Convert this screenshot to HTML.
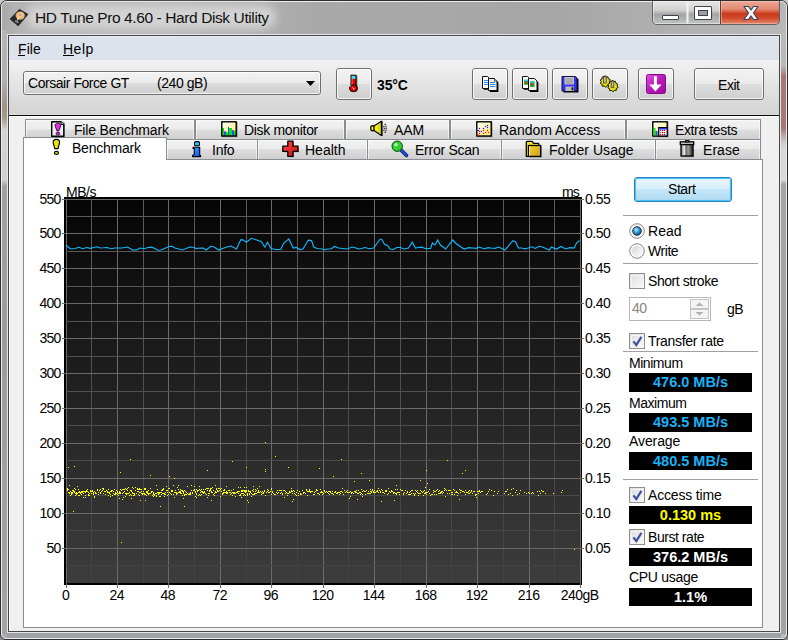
<!DOCTYPE html>
<html><head><meta charset="utf-8">
<style>
*{box-sizing:border-box;margin:0;padding:0}
html,body{width:788px;height:640px;overflow:hidden;background:linear-gradient(#c8c8c8,#a8a8a8 50%,#8c8c8c);font-family:"Liberation Sans",sans-serif;font-size:13px;color:#000}
.a{position:absolute}
.t{position:absolute;white-space:pre;line-height:16px;font-size:14px;letter-spacing:-0.45px}
#win{left:0;top:0;width:788px;height:640px;border:1px solid #2e2e2e;border-radius:7px 7px 6px 6px;
 background:linear-gradient(90deg,#a8a8a8 0,#b4b4b4 2%,#b8b8b8 20%,#a9a9a9 40%,#a6a6a6 70%,#b0b0b0 85%,#b8b8b8 100%);overflow:hidden}
#winhl{left:1px;top:1px;width:786px;height:638px;border:1px solid #ececec;border-radius:6px 6px 5px 5px}
#glow{left:26px;top:5px;width:250px;height:24px;border-radius:12px;background:#d3d3d3;filter:blur(5px)}
#title{left:35px;top:9px;font-size:15.5px;letter-spacing:-0.4px;color:#111;line-height:18px}
#clo{left:7px;top:34px;width:774px;height:599px;border:1px solid #e6e6e6}
#cli{left:8px;top:35px;width:772px;height:597px;border:1px solid #474747;background:#f0f0f0}
#menubar{left:9px;top:36px;width:770px;height:24px;background:#dce3ec;border-top:1px solid #e6edf6}
.btn{position:absolute;border:1px solid #707070;border-radius:3px;background:linear-gradient(#f2f2f2 0,#ebebeb 50%,#dddddd 50%,#cfcfcf 100%)}
.btn::after{content:"";position:absolute;left:0;top:0;right:0;bottom:0;border:1px solid rgba(255,255,255,.75);border-radius:2px}
#toolbar{left:9px;top:60px;width:770px;height:54px;background:linear-gradient(#f2f2f2,#d3d3d3)}
.tab{position:absolute;border:1px solid #898c95;background:linear-gradient(#f2f2f2 0,#ebebeb 45%,#dddddd 50%,#cfcfcf 100%)}
.tab::after{content:"";position:absolute;left:0;top:0;right:0;bottom:0;border:1px solid rgba(255,255,255,.6);border-bottom:0}
#panel{left:23px;top:159px;width:740px;height:469px;border:1px solid #898c95;background:#fff}
.sep{position:absolute;left:623px;width:135px;height:1px;background:#a0a0a0}
.vbox{position:absolute;left:629px;width:123px;background:#000;color:#fff;font-weight:bold;font-size:14.5px;text-align:center;line-height:19px}
.chk{position:absolute;left:629px;width:16px;height:16px;border:1px solid #8f8f8f;background:linear-gradient(135deg,#dcdcdc,#fbfbfb)}
.chk::after{content:"";position:absolute;left:1px;top:1px;right:1px;bottom:1px;border:1px solid #f4f4f4}
.yl{position:absolute;left:19.5px;width:41px;text-align:right;font-size:14px;letter-spacing:-0.75px;line-height:16px;white-space:pre}
.yr{position:absolute;left:585px;width:50px;text-align:left;font-size:14px;letter-spacing:-0.5px;line-height:16px;white-space:pre}
.xl{position:absolute;top:587px;width:80px;text-align:center;font-size:14px;letter-spacing:-0.5px;line-height:16px;white-space:pre}
</style></head><body>
<div id="win" class="a"></div>
<div id="winhl" class="a"></div>
<div id="glow" class="a"></div>
<!-- app icon -->
<svg class="a" style="left:9px;top:8px" width="20" height="20" viewBox="0 0 20 20">
 <path d="M10.4 1.3 L19 6.2 L9.2 18 L1 11 Z" fill="#2a2a2a" stroke="#1a1a1a" stroke-width=".6" stroke-linejoin="round"/>
 <ellipse cx="11.2" cy="7.6" rx="4.6" ry="4.2" fill="#f0b56c"/>
 <ellipse cx="11.8" cy="6.8" rx="2.8" ry="2.4" fill="#f8cf98" opacity=".7"/>
 <rect x="10.2" y="6.2" width="2.4" height="2" fill="#a0a8b8"/>
 <path d="M10 8.6 L8.2 12.6" stroke="#eeeeee" stroke-width="1"/>
 <path d="M6 13 L9.5 14.5" stroke="#9a9090" stroke-width="1.4"/>
</svg>
<div id="title" class="t">HD Tune Pro 4.60 - Hard Disk Utility</div>
<!-- caption buttons -->
<div class="a" style="left:652px;top:1px;width:128px;height:24px;border:1px solid #626262;border-top:0;border-radius:0 0 5px 5px;overflow:hidden;background:#999">
 <div class="a" style="left:0;top:0;width:34px;height:23px;background:linear-gradient(#e6e6e6 0,#d2d2d2 40%,#a4a4a4 58%,#b4b4b4 80%,#c4c4c4 100%);box-shadow:inset 0 0 0 1px rgba(255,255,255,.45)"></div>
 <div class="a" style="left:34px;top:0;width:1px;height:23px;background:#f0f0f0"></div>
 <div class="a" style="left:35px;top:0;width:32px;height:23px;background:linear-gradient(#e6e6e6 0,#d2d2d2 40%,#a4a4a4 58%,#b4b4b4 80%,#c4c4c4 100%);box-shadow:inset 0 0 0 1px rgba(255,255,255,.45)"></div>
 <div class="a" style="left:67px;top:0;width:1px;height:23px;background:#6a3a30"></div>
 <div class="a" style="left:68px;top:0;width:59px;height:23px;background:linear-gradient(#eca898 0,#e48a74 35%,#cc3a1c 55%,#d24a2c 75%,#e28a70 100%);box-shadow:inset 0 0 0 1px rgba(255,210,200,.45)"></div>
</div>
<div class="a" style="left:662px;top:15px;width:17px;height:5px;background:#fff;border:1px solid #3d4454;border-radius:1px"></div>
<div class="a" style="left:694px;top:6px;width:18px;height:14px;background:#fff;border:1px solid #3d4454;border-radius:1px"><div class="a" style="left:3px;top:3px;width:10px;height:6px;background:#9c9c9c;border:1px solid #3d4454"></div></div>
<svg class="a" style="left:742px;top:5px" width="18" height="16" viewBox="0 0 18 16">
 <path d="M2 1.5 L6.5 1.5 L9 5 L11.5 1.5 L16 1.5 L11.5 8 L16 14.5 L11.5 14.5 L9 11 L6.5 14.5 L2 14.5 L6.5 8 Z" fill="#f4f4f4" stroke="#3d4454" stroke-width="1.2" stroke-linejoin="round"/>
</svg>
<div class="a" style="left:2px;top:30px;width:5px;height:604px;background:linear-gradient(#b6b6b6 0,#b0b0b0 50px,#a39385 75px,#a69888 88px,#d4d4d4 100px,#d0d0d0 150px,#a2a2a2 156px,#9c9c9c 300px,#a4a4a4 604px)"></div>
<div class="a" style="left:781px;top:30px;width:5px;height:604px;background:linear-gradient(#bababa 0,#b8b8b8 36px,#a87878 46px,#a87676 98px,#c8c0c0 110px,#d8d8d8 118px,#d8d8d8 150px,#a4a4a4 154px,#a2a2a2 604px)"></div>
<div class="a" style="left:7px;top:633px;width:774px;height:5px;background:#9ea1a6"></div>
<div id="clo" class="a"></div>
<div id="cli" class="a"></div>
<div class="a" style="left:9px;top:36px;width:1px;height:595px;background:#fff"></div>
<div id="menubar" class="a"></div>
<div class="t" style="left:18px;top:41px;letter-spacing:0.1px">File</div>
<div class="a" style="left:18px;top:55px;width:7px;height:1px;background:#000"></div>
<div class="t" style="left:63px;top:41px;letter-spacing:0.5px">Help</div>
<div class="a" style="left:63px;top:55px;width:11px;height:1px;background:#000"></div>
<div id="toolbar" class="a"></div>
<div class="a" style="left:9px;top:114px;width:770px;height:1px;background:#dedede"></div>
<div class="a" style="left:9px;top:115px;width:770px;height:1px;background:#050505"></div>
<div class="a" style="left:9px;top:116px;width:770px;height:1px;background:#ffffff"></div>
<!-- combo -->
<div class="btn" style="left:23px;top:71px;width:298px;height:24px"></div>
<div class="t" style="left:28px;top:75px">Corsair Force GT</div>
<div class="t" style="left:157px;top:75px">(240 gB)</div>
<svg class="a" style="left:305px;top:80px" width="12" height="8"><path d="M1 1 L10 1 L5.5 6 Z" fill="#000"/></svg>
<!-- temp button -->
<div class="btn" style="left:336px;top:68px;width:36px;height:32px"></div>
<svg class="a" style="left:346px;top:74px" width="14" height="19" viewBox="0 0 14 19">
 <rect x="6.4" y="1.6" width="5" height="12" fill="#000" opacity=".5"/>
 <rect x="5" y="1.2" width="5" height="12" fill="#e80000" stroke="#000" stroke-width="1"/>
 <rect x="5.6" y="1.8" width="3.8" height="3.2" fill="#30e0f0"/>
 <rect x="5.6" y="5" width="1" height="8" fill="#ff6060"/>
 <ellipse cx="8" cy="14.6" rx="4" ry="3.5" fill="#000" opacity=".5"/>
 <ellipse cx="7.4" cy="14.2" rx="3.9" ry="3.5" fill="#e80000" stroke="#000" stroke-width="1"/>
 <path d="M4 13 Q4.3 11.6 5.3 11" stroke="#40e0f0" stroke-width="1" fill="none"/>
 <path d="M6.6 13.4 Q6.9 15 8.6 15" stroke="#fff" stroke-width="1" fill="none"/>
</svg>
<div class="t" style="left:377px;top:77px;font-weight:bold;font-size:14px;letter-spacing:-0.1px">35°C</div>
<!-- icon buttons -->
<div class="btn" style="left:472px;top:68px;width:36px;height:32px"></div>
<div class="btn" style="left:512px;top:68px;width:36px;height:32px"></div>
<div class="btn" style="left:552px;top:68px;width:36px;height:32px"></div>
<div class="btn" style="left:592px;top:68px;width:36px;height:32px"></div>
<div class="btn" style="left:638px;top:68px;width:36px;height:32px"></div>
<div class="btn" style="left:694px;top:68px;width:70px;height:32px"></div>
<div class="t" style="left:718px;top:77px">Exit</div>
<!-- copy icon -->
<svg class="a" style="left:476px;top:70px" width="30" height="28" viewBox="0 0 30 28">
 <path d="M7 7 H12 L14 9 V19 H7 Z" fill="#000" transform="translate(0.8 0.8)"/>
 <path d="M6.5 6.5 H11.5 L13.5 8.5 V18.5 H6.5 Z" fill="#fbfbfb" stroke="#111" stroke-width="1"/>
 <rect x="8" y="10" width="4" height="1" fill="#1e8cff"/><rect x="8" y="12" width="4" height="1" fill="#1e8cff"/><rect x="8" y="14" width="4" height="1" fill="#1e8cff"/>
 <path d="M13 9 H19 L21.5 11.5 V21 H13 Z" fill="#000" transform="translate(0.9 0.9)"/>
 <path d="M12.5 8.5 H18.5 L21 11 V20.5 H12.5 Z" fill="#efefef" stroke="#111" stroke-width="1"/>
 <path d="M18.5 8.5 V11 H21" fill="#fff" stroke="#111" stroke-width=".8"/>
 <rect x="14" y="12" width="5" height="1" fill="#1e8cff"/><rect x="14" y="14" width="5.5" height="1" fill="#1e8cff"/><rect x="14" y="16" width="5.5" height="1" fill="#1e8cff"/>
</svg>
<svg class="a" style="left:516px;top:70px" width="30" height="28" viewBox="0 0 30 28">
 <path d="M7 7 H12 L14 9 V19 H7 Z" fill="#000" transform="translate(0.8 0.8)"/>
 <path d="M6.5 6.5 H11.5 L13.5 8.5 V18.5 H6.5 Z" fill="#fbfbfb" stroke="#111" stroke-width="1"/>
 <rect x="8" y="9.8" width="4.5" height="5" fill="#22b030"/><rect x="8" y="9.8" width="4.5" height="1.2" fill="#30c8f0"/><rect x="9.3" y="11.6" width="2" height="2" fill="#e82020"/>
 <path d="M13 9 H19 L21.5 11.5 V21 H13 Z" fill="#000" transform="translate(0.9 0.9)"/>
 <path d="M12.5 8.5 H18.5 L21 11 V20.5 H12.5 Z" fill="#efefef" stroke="#111" stroke-width="1"/>
 <rect x="14" y="11.5" width="4.5" height="5.5" fill="#22b030"/><rect x="14" y="11.5" width="4.5" height="1.2" fill="#30c8f0"/><rect x="15.2" y="13.5" width="2" height="2" fill="#e82020"/>
</svg>
<svg class="a" style="left:556px;top:70px" width="30" height="28" viewBox="0 0 30 28">
 <path d="M6.5 7 H20 L21.5 8.5 V21.5 H6.5 Z" fill="#000" transform="translate(1 1)"/>
 <path d="M6 6.5 H19.5 L21 8 V21 H6 Z" fill="#3434f0" stroke="#101040" stroke-width="1"/>
 <rect x="8.5" y="7" width="9.5" height="7.5" fill="#c8c8c8"/>
 <rect x="9.5" y="8.5" width="7.5" height="1" fill="#8a8a8a"/><rect x="9.5" y="10.5" width="7.5" height="1" fill="#8a8a8a"/><rect x="9.5" y="12.5" width="7.5" height="1" fill="#8a8a8a"/>
 <rect x="9.5" y="16.5" width="8.5" height="4.5" fill="#bdbdbd"/>
 <rect x="15.5" y="17.3" width="2" height="3" fill="#1a1a1a"/>
</svg>
<svg class="a" style="left:596px;top:70px" width="30" height="28" viewBox="0 0 30 28">
 <g stroke="#1a1a00" stroke-width="1">
  <path d="M9 5.5 L10 7.2 L12 6.8 L12.4 8.8 L14.3 9.6 L13.5 11.4 L14.7 13 L12.8 14 L12.8 16 L10.8 15.8 L9.6 17.4 L8.3 15.9 L6.3 16.3 L6.1 14.3 L4.3 13.4 L5.2 11.6 L4.2 9.9 L6 9 L6.2 7 L8.2 7.3 Z" fill="#e8dc10"/>
  <path d="M16.5 10 L17.5 11.7 L19.5 11.3 L19.9 13.3 L21.8 14.1 L21 15.9 L22.2 17.5 L20.3 18.5 L20.3 20.5 L18.3 20.3 L17.1 21.9 L15.8 20.4 L13.8 20.8 L13.6 18.8 L11.8 17.9 L12.7 16.1 L11.7 14.4 L13.5 13.5 L13.7 11.5 L15.7 11.8 Z" fill="#e8dc10"/>
 </g>
 <rect x="7.6" y="6.5" width="2.6" height="6.5" fill="#b8b8b8" stroke="#333" stroke-width=".7"/>
 <rect x="15.2" y="11" width="2.6" height="6.5" fill="#b8b8b8" stroke="#333" stroke-width=".7"/>
</svg>
<svg class="a" style="left:646px;top:74px" width="20" height="20" viewBox="0 0 20 20">
 <defs><linearGradient id="pg" x1="0" y1="0" x2="1" y2="1"><stop offset="0" stop-color="#e050e0"/><stop offset=".5" stop-color="#b818b8"/><stop offset="1" stop-color="#9a0a9a"/></linearGradient></defs>
 <rect x="0.5" y="0.5" width="19" height="19" rx="2" fill="url(#pg)" stroke="#880888"/>
 <path d="M7.9 2.3 H10.9 V10.6 H15.6 L9.4 17.4 L3.2 10.6 H7.9 Z" fill="#fff"/>
</svg>

<!-- tabs -->
<div class="tab" style="left:25px;top:119px;width:170px;height:22px"></div>
<div class="tab" style="left:195px;top:119px;width:150px;height:22px"></div>
<div class="tab" style="left:345px;top:119px;width:105px;height:22px"></div>
<div class="tab" style="left:450px;top:119px;width:176px;height:22px"></div>
<div class="tab" style="left:626px;top:119px;width:135px;height:22px"></div>
<div id="panel" class="a"></div>
<div class="tab" style="left:166px;top:139px;width:92px;height:21px"></div>
<div class="tab" style="left:257px;top:139px;width:111px;height:21px"></div>
<div class="tab" style="left:367px;top:139px;width:135px;height:21px"></div>
<div class="tab" style="left:501px;top:139px;width:155px;height:21px"></div>
<div class="tab" style="left:655px;top:139px;width:106px;height:21px"></div>
<div class="a" style="left:23px;top:137px;width:144px;height:23px;border:1px solid #898c95;border-bottom:0;background:#fff"></div>

<div class="t" style="left:74px;top:122px;letter-spacing:-0.18px">File Benchmark</div>
<div class="t" style="left:244px;top:122px;letter-spacing:-0.32px">Disk monitor</div>
<div class="t" style="left:394px;top:122px;letter-spacing:-0.05px">AAM</div>
<div class="t" style="left:499px;top:122px;letter-spacing:0.0px">Random Access</div>
<div class="t" style="left:675px;top:122px;letter-spacing:-0.37px">Extra tests</div>
<div class="t" style="left:72px;top:140px;letter-spacing:-0.23px">Benchmark</div>
<div class="t" style="left:212px;top:142px;letter-spacing:-0.25px">Info</div>
<div class="t" style="left:305px;top:142px;letter-spacing:0.0px">Health</div>
<div class="t" style="left:415px;top:142px;letter-spacing:-0.25px">Error Scan</div>
<div class="t" style="left:549px;top:142px;letter-spacing:0.05px">Folder Usage</div>
<div class="t" style="left:703px;top:142px;letter-spacing:0.05px">Erase</div>

<!-- tab icons -->
<svg class="a" style="left:50px;top:120px" width="17" height="18" viewBox="0 0 17 18">
 <rect x="2.4" y="2.4" width="12.6" height="15" fill="#000" opacity=".3"/>
 <path d="M1.7 1.7 H11 L13.8 4.5 V16.3 H1.7 Z" fill="#ececec" stroke="#000" stroke-width="1.4" stroke-linejoin="round"/>
 <path d="M11 1.7 V4.5 H13.8" fill="#fff" stroke="#000" stroke-width="1"/>
 <path d="M7.9 3.2 C10 3.2 10.8 4.3 10.6 6 L8.8 11 H7 L5.2 6 C5 4.3 5.8 3.2 7.9 3.2 Z" fill="#e030e8" stroke="#3a003a" stroke-width=".9"/>
 <ellipse cx="7.9" cy="13.6" rx="1.9" ry="1.3" fill="#e030e8" stroke="#3a003a" stroke-width=".9"/>
</svg>
<svg class="a" style="left:220px;top:121px" width="19" height="18" viewBox="0 0 19 18">
 <rect x="2" y="1" width="15.6" height="15.2" fill="#000" opacity=".35"/>
 <rect x="1.8" y="0.8" width="14.4" height="14.2" fill="url(#yg)"/>
 <rect x="2.0" y="6.9" width="2.0" height="7.9" fill="#00ee00"/><rect x="4.0" y="10.3" width="2.0" height="4.5" fill="#4040ff"/><rect x="6.0" y="11.1" width="2.0" height="3.7" fill="#00ee00"/><rect x="8.0" y="6.0" width="1.0" height="8.8" fill="#4040ff"/><rect x="9.0" y="7.0" width="3.0" height="7.8" fill="#00ee00"/><rect x="12.0" y="9.2" width="2.0" height="5.6" fill="#4040ff"/><rect x="14.0" y="9.9" width="2.2" height="4.9" fill="#00ee00"/>
 <rect x="1.8" y="0.8" width="14.4" height="14.2" fill="none" stroke="#000" stroke-width="1.4"/>
</svg>
<svg class="a" style="left:364px;top:118px" width="32" height="22" viewBox="0 0 32 22">
 <ellipse cx="8.6" cy="10.3" rx="1.9" ry="2.6" fill="#f2ee10" stroke="#000" stroke-width="1.2"/>
 <path d="M10 8 L17.4 3.2 V17.6 L10 12.6 Z" fill="#f2ee10" stroke="#000" stroke-width="1.2" stroke-linejoin="round"/>
 <rect x="17" y="3" width="1.6" height="15" fill="#000"/>
 <path d="M15 5.5 V15.5" stroke="#777" stroke-width=".8" stroke-dasharray="1 1"/>
 <path d="M19.6 8 Q21 10.3 19.6 12.8" fill="none" stroke="#000" stroke-width="1.1" stroke-dasharray="1.3 .7"/>
 <path d="M20.8 5.8 Q23.6 10.3 20.8 14.8" fill="none" stroke="#000" stroke-width="1.1" stroke-dasharray="1.3 .7"/>
</svg>
<svg class="a" style="left:476px;top:121px" width="18" height="18" viewBox="0 0 18 18">
 <defs><linearGradient id="yg" x1="0" y1="0" x2="1" y2="1"><stop offset="0" stop-color="#ffffff"/><stop offset="1" stop-color="#fff070"/></linearGradient></defs>
 <rect x="1" y="1" width="15.6" height="15.2" fill="#000" opacity=".35"/>
 <rect x="0.8" y="0.8" width="14.4" height="14.2" fill="url(#yg)" stroke="#000" stroke-width="1.4"/>
 <circle cx="3.5" cy="7.4" r=".75" fill="#1a1aff"/><circle cx="2.4" cy="9.4" r=".75" fill="#1a1aff"/><circle cx="5.4" cy="10.4" r=".75" fill="#1a1aff"/><circle cx="7.5" cy="7.4" r=".75" fill="#1a1aff"/><circle cx="9.5" cy="5.4" r=".75" fill="#1a1aff"/><circle cx="11.5" cy="4.4" r=".75" fill="#1a1aff"/><circle cx="11.5" cy="6.5" r=".75" fill="#1a1aff"/><circle cx="3.5" cy="10.5" r=".75" fill="#ff1010"/><circle cx="3.5" cy="12.5" r=".75" fill="#ff1010"/><circle cx="7.5" cy="9.5" r=".75" fill="#ff1010"/><circle cx="7.5" cy="12.5" r=".75" fill="#ff1010"/><circle cx="9.5" cy="11.5" r=".75" fill="#ff1010"/><circle cx="11.5" cy="9.5" r=".75" fill="#ff1010"/><circle cx="12.5" cy="11.5" r=".75" fill="#ff1010"/><circle cx="2.5" cy="14.2" r=".75" fill="#ff1010"/>
</svg>
<svg class="a" style="left:652px;top:121px" width="18" height="18" viewBox="0 0 18 18">
 <rect x="1" y="1" width="15.6" height="15.2" fill="#000" opacity=".35"/>
 <rect x="0.8" y="0.8" width="14.4" height="14.2" fill="url(#yg)" stroke="#000" stroke-width="1.4"/>
 <rect x="1.5" y="7" width="2" height="7.5" fill="#00ee00"/><rect x="3.5" y="10" width="2" height="4.5" fill="#4040ff"/><rect x="5.5" y="11" width="1" height="3.5" fill="#00ee00"/>
 <rect x="6.7" y="6.6" width="8.5" height="8.4" fill="#fff" stroke="#000" stroke-width="1.2"/>
 <rect x="7.3" y="7.2" width="7.3" height="1.3" fill="#0a0aff"/>
 <circle cx="8.5" cy="9.5" r=".75" fill="#ff1010"/><circle cx="10.5" cy="9.5" r=".75" fill="#1a1aff"/><circle cx="12.5" cy="9.5" r=".75" fill="#ff1010"/><circle cx="8.5" cy="11.5" r=".75" fill="#10c010"/><circle cx="10.5" cy="11.5" r=".75" fill="#ff1010"/><circle cx="12.5" cy="11.5" r=".75" fill="#ff1010"/><circle cx="8.5" cy="13.5" r=".75" fill="#ff1010"/><circle cx="10.5" cy="13.5" r=".75" fill="#ff1010"/><circle cx="12.5" cy="13.5" r=".75" fill="#1a1aff"/>
</svg>
<svg class="a" style="left:51px;top:138px" width="12" height="18" viewBox="0 0 12 18">
 <path d="M5.3 1.4 C8 1.4 8.8 2.8 8.5 5 L7 10.6 H3.8 L2.2 5 C1.9 2.8 2.8 1.4 5.3 1.4 Z" fill="#e8e010" stroke="#000" stroke-width="1.1"/>
 <ellipse cx="5.4" cy="14.9" rx="2.1" ry="1.5" fill="#e8e010" stroke="#000" stroke-width="1.1"/>
</svg>
<svg class="a" style="left:192px;top:141px" width="10" height="17" viewBox="0 0 10 17">
 <defs><linearGradient id="ig" x1="0" y1="0" x2="1" y2="1"><stop offset="0" stop-color="#40a0ff"/><stop offset="1" stop-color="#0050f0"/></linearGradient></defs>
 <rect x="2.5" y="0.6" width="5" height="4.2" rx="1.3" fill="#20c8f8" stroke="#000" stroke-width="1.1"/>
 <path d="M1 6.3 H7.7 V14.6 H8.6 V15.6 H0.5 V14.6 L2.3 13.6 V7.6 L1 7.4 Z" fill="url(#ig)" stroke="#000" stroke-width="1.1" stroke-linejoin="round"/>
</svg>
<svg class="a" style="left:281px;top:140px" width="19" height="19" viewBox="0 0 19 19">
 <defs><linearGradient id="rg" x1="0" y1="0" x2="1" y2="1"><stop offset="0" stop-color="#ff5050"/><stop offset="1" stop-color="#c80808"/></linearGradient></defs>
 <path d="M6.8 1.2 H12 V6.2 H17 V11.4 H12 V16.4 H6.8 V11.4 H1.8 V6.2 H6.8 Z" fill="#000" opacity=".35" transform="translate(.8 .8)"/>
 <path d="M6.8 1.2 H12 V6.2 H17 V11.4 H12 V16.4 H6.8 V11.4 H1.8 V6.2 H6.8 Z" fill="url(#rg)" stroke="#000" stroke-width="1.3" stroke-linejoin="round"/>
</svg>
<svg class="a" style="left:391px;top:140px" width="18" height="18" viewBox="0 0 18 18">
 <path d="M9 9 L15.5 15.5" stroke="#0a1a60" stroke-width="3.5" stroke-linecap="round"/>
 <path d="M9 9 L15.5 15.5" stroke="#2050e0" stroke-width="2" stroke-linecap="round"/>
 <circle cx="6.2" cy="6.2" r="5.2" fill="#30d030" stroke="#104010" stroke-width="1"/>
 <circle cx="5" cy="4.8" r="1.8" fill="#b0ffb0"/>
</svg>
<svg class="a" style="left:524px;top:139px" width="20" height="20" viewBox="0 0 20 20">
 <defs><linearGradient id="fg" x1="0" y1="0" x2="1" y2="1"><stop offset="0" stop-color="#f4d838"/><stop offset="1" stop-color="#d49a08"/></linearGradient></defs>
 <rect x="5.6" y="7.6" width="12.2" height="11" fill="#000" opacity=".3"/>
 <path d="M2.3 3.2 Q2.3 2.3 3.2 2.3 H8.2 L9.6 4.4 H14.7 V7 H4.6 V17.4 H2.3 Z" fill="#f2dc30" stroke="#000" stroke-width="1.3" stroke-linejoin="round"/>
 <rect x="4.5" y="6.5" width="12.2" height="10.9" fill="url(#fg)" stroke="#000" stroke-width="1.3"/>
 <rect x="5.2" y="7.2" width=".8" height="9.6" fill="#fff8a0"/>
 <rect x="14.3" y="7.2" width=".7" height="9.6" fill="#a8a8a8"/>
</svg>
<svg class="a" style="left:678px;top:139px" width="20" height="20" viewBox="0 0 20 20">
 <defs><linearGradient id="tg" x1="0" y1="0" x2="1" y2="0"><stop offset="0" stop-color="#7a7a7a"/><stop offset=".28" stop-color="#f0f0f0"/><stop offset=".42" stop-color="#6a6a6a"/><stop offset=".6" stop-color="#a0a0a0"/><stop offset=".9" stop-color="#3a3a3a"/><stop offset="1" stop-color="#555"/></linearGradient></defs>
 <rect x="4" y="6.6" width="12" height="11.6" fill="#000" opacity=".3"/>
 <rect x="3" y="5.4" width="12" height="11.6" fill="url(#tg)" stroke="#000" stroke-width="1.3"/>
 <rect x="2.3" y="2.8" width="13.4" height="2.8" fill="#c8c8c8" stroke="#000" stroke-width="1.3"/>
 <rect x="7.4" y="1.6" width="3.6" height="1.4" fill="#9a9a9a" stroke="#000" stroke-width="1"/>
</svg>

<!-- graph -->
<svg class="a" style="left:0;top:0" width="788" height="640" viewBox="0 0 788 640">
 <defs><linearGradient id="bg" x1="0" y1="0" x2="0" y2="1"><stop offset="0" stop-color="#050505"/><stop offset="1" stop-color="#3d3d3d"/></linearGradient><linearGradient id="mg" gradientUnits="userSpaceOnUse" x1="0" y1="199" x2="0" y2="583"><stop offset="0" stop-color="#5c5c5c"/><stop offset="1" stop-color="#424242"/></linearGradient></defs>
 <rect x="64" y="197" width="518" height="388" fill="#000"/>
 <rect x="66" y="199" width="515" height="384" fill="url(#bg)"/>
 <g stroke-width="1"><line x1="66.5" y1="199" x2="66.5" y2="588" stroke="#6a6a6a"/><line x1="91.5" y1="199" x2="91.5" y2="583" stroke="url(#mg)"/><line x1="117.5" y1="199" x2="117.5" y2="588" stroke="#6a6a6a"/><line x1="143.5" y1="199" x2="143.5" y2="583" stroke="url(#mg)"/><line x1="168.5" y1="199" x2="168.5" y2="588" stroke="#6a6a6a"/><line x1="194.5" y1="199" x2="194.5" y2="583" stroke="url(#mg)"/><line x1="220.5" y1="199" x2="220.5" y2="588" stroke="#6a6a6a"/><line x1="246.5" y1="199" x2="246.5" y2="583" stroke="url(#mg)"/><line x1="271.5" y1="199" x2="271.5" y2="588" stroke="#6a6a6a"/><line x1="297.5" y1="199" x2="297.5" y2="583" stroke="url(#mg)"/><line x1="323.5" y1="199" x2="323.5" y2="588" stroke="#6a6a6a"/><line x1="348.5" y1="199" x2="348.5" y2="583" stroke="url(#mg)"/><line x1="374.5" y1="199" x2="374.5" y2="588" stroke="#6a6a6a"/><line x1="400.5" y1="199" x2="400.5" y2="583" stroke="url(#mg)"/><line x1="426.5" y1="199" x2="426.5" y2="588" stroke="#6a6a6a"/><line x1="451.5" y1="199" x2="451.5" y2="583" stroke="url(#mg)"/><line x1="477.5" y1="199" x2="477.5" y2="588" stroke="#6a6a6a"/><line x1="503.5" y1="199" x2="503.5" y2="583" stroke="url(#mg)"/><line x1="529.5" y1="199" x2="529.5" y2="588" stroke="#6a6a6a"/><line x1="554.5" y1="199" x2="554.5" y2="583" stroke="url(#mg)"/><line x1="580.5" y1="199" x2="580.5" y2="588" stroke="#6a6a6a"/><line x1="62" y1="199.5" x2="584" y2="199.5" stroke="#6a6a6a"/><line x1="66" y1="216.5" x2="581" y2="216.5" stroke="url(#mg)"/><line x1="62" y1="233.5" x2="584" y2="233.5" stroke="#6a6a6a"/><line x1="66" y1="251.5" x2="581" y2="251.5" stroke="url(#mg)"/><line x1="62" y1="268.5" x2="584" y2="268.5" stroke="#6a6a6a"/><line x1="66" y1="286.5" x2="581" y2="286.5" stroke="url(#mg)"/><line x1="62" y1="303.5" x2="584" y2="303.5" stroke="#6a6a6a"/><line x1="66" y1="321.5" x2="581" y2="321.5" stroke="url(#mg)"/><line x1="62" y1="338.5" x2="584" y2="338.5" stroke="#6a6a6a"/><line x1="66" y1="356.5" x2="581" y2="356.5" stroke="url(#mg)"/><line x1="62" y1="373.5" x2="584" y2="373.5" stroke="#6a6a6a"/><line x1="66" y1="391.5" x2="581" y2="391.5" stroke="url(#mg)"/><line x1="62" y1="408.5" x2="584" y2="408.5" stroke="#6a6a6a"/><line x1="66" y1="425.5" x2="581" y2="425.5" stroke="url(#mg)"/><line x1="62" y1="443.5" x2="584" y2="443.5" stroke="#6a6a6a"/><line x1="66" y1="460.5" x2="581" y2="460.5" stroke="url(#mg)"/><line x1="62" y1="478.5" x2="584" y2="478.5" stroke="#6a6a6a"/><line x1="66" y1="495.5" x2="581" y2="495.5" stroke="url(#mg)"/><line x1="62" y1="513.5" x2="584" y2="513.5" stroke="#6a6a6a"/><line x1="66" y1="530.5" x2="581" y2="530.5" stroke="url(#mg)"/><line x1="62" y1="548.5" x2="584" y2="548.5" stroke="#6a6a6a"/><line x1="66" y1="565.5" x2="581" y2="565.5" stroke="url(#mg)"/></g>
 <g stroke="#6c6c6c" stroke-width="1"></g>
 <g fill="#ffff00"><rect x="67" y="488" width="1" height="1"/><rect x="67" y="489" width="1" height="1"/><rect x="67" y="490" width="1" height="1"/><rect x="68" y="467" width="1" height="1"/><rect x="68" y="489" width="1" height="1"/><rect x="68" y="492" width="1" height="1"/><rect x="69" y="485" width="1" height="1"/><rect x="69" y="492" width="1" height="1"/><rect x="69" y="493" width="1" height="1"/><rect x="70" y="491" width="1" height="1"/><rect x="70" y="495" width="1" height="1"/><rect x="71" y="492" width="1" height="1"/><rect x="71" y="493" width="1" height="1"/><rect x="71" y="494" width="1" height="1"/><rect x="72" y="490" width="1" height="1"/><rect x="72" y="492" width="1" height="1"/><rect x="72" y="493" width="1" height="1"/><rect x="73" y="490" width="1" height="1"/><rect x="73" y="491" width="1" height="1"/><rect x="73" y="511" width="1" height="1"/><rect x="74" y="466" width="1" height="1"/><rect x="74" y="488" width="1" height="1"/><rect x="74" y="491" width="1" height="1"/><rect x="74" y="492" width="1" height="1"/><rect x="75" y="489" width="1" height="1"/><rect x="75" y="493" width="1" height="1"/><rect x="75" y="495" width="1" height="1"/><rect x="76" y="492" width="1" height="1"/><rect x="76" y="493" width="1" height="1"/><rect x="76" y="494" width="1" height="1"/><rect x="77" y="486" width="1" height="1"/><rect x="77" y="493" width="1" height="1"/><rect x="78" y="489" width="1" height="1"/><rect x="78" y="492" width="1" height="1"/><rect x="78" y="495" width="1" height="1"/><rect x="79" y="491" width="1" height="1"/><rect x="79" y="492" width="1" height="1"/><rect x="79" y="495" width="1" height="1"/><rect x="80" y="492" width="1" height="1"/><rect x="80" y="493" width="1" height="1"/><rect x="81" y="491" width="1" height="1"/><rect x="81" y="492" width="1" height="1"/><rect x="81" y="494" width="1" height="1"/><rect x="82" y="491" width="1" height="1"/><rect x="82" y="492" width="1" height="1"/><rect x="83" y="491" width="1" height="1"/><rect x="83" y="493" width="1" height="1"/><rect x="83" y="497" width="1" height="1"/><rect x="84" y="491" width="1" height="1"/><rect x="85" y="491" width="1" height="1"/><rect x="85" y="492" width="1" height="1"/><rect x="85" y="495" width="1" height="1"/><rect x="85" y="497" width="1" height="1"/><rect x="86" y="490" width="1" height="1"/><rect x="86" y="491" width="1" height="1"/><rect x="87" y="489" width="1" height="1"/><rect x="87" y="491" width="1" height="1"/><rect x="88" y="492" width="1" height="1"/><rect x="88" y="494" width="1" height="1"/><rect x="88" y="495" width="1" height="1"/><rect x="89" y="493" width="1" height="1"/><rect x="89" y="495" width="1" height="1"/><rect x="90" y="490" width="1" height="1"/><rect x="90" y="491" width="1" height="1"/><rect x="91" y="491" width="1" height="1"/><rect x="91" y="493" width="1" height="1"/><rect x="92" y="490" width="1" height="1"/><rect x="92" y="491" width="1" height="1"/><rect x="93" y="492" width="1" height="1"/><rect x="93" y="493" width="1" height="1"/><rect x="93" y="494" width="1" height="1"/><rect x="94" y="491" width="1" height="1"/><rect x="94" y="496" width="1" height="1"/><rect x="94" y="497" width="1" height="1"/><rect x="95" y="492" width="1" height="1"/><rect x="95" y="493" width="1" height="1"/><rect x="96" y="493" width="1" height="1"/><rect x="97" y="489" width="1" height="1"/><rect x="97" y="490" width="1" height="1"/><rect x="98" y="492" width="1" height="1"/><rect x="98" y="494" width="1" height="1"/><rect x="99" y="490" width="1" height="1"/><rect x="100" y="489" width="1" height="1"/><rect x="100" y="492" width="1" height="1"/><rect x="100" y="493" width="1" height="1"/><rect x="101" y="491" width="1" height="1"/><rect x="102" y="488" width="1" height="1"/><rect x="102" y="490" width="1" height="1"/><rect x="103" y="488" width="1" height="1"/><rect x="103" y="489" width="1" height="1"/><rect x="103" y="493" width="1" height="1"/><rect x="104" y="491" width="1" height="1"/><rect x="105" y="491" width="1" height="1"/><rect x="105" y="494" width="1" height="1"/><rect x="106" y="490" width="1" height="1"/><rect x="107" y="491" width="1" height="1"/><rect x="107" y="492" width="1" height="1"/><rect x="108" y="489" width="1" height="1"/><rect x="108" y="492" width="1" height="1"/><rect x="108" y="495" width="1" height="1"/><rect x="109" y="492" width="1" height="1"/><rect x="109" y="493" width="1" height="1"/><rect x="110" y="491" width="1" height="1"/><rect x="110" y="494" width="1" height="1"/><rect x="110" y="496" width="1" height="1"/><rect x="111" y="490" width="1" height="1"/><rect x="111" y="491" width="1" height="1"/><rect x="112" y="490" width="1" height="1"/><rect x="112" y="495" width="1" height="1"/><rect x="113" y="491" width="1" height="1"/><rect x="113" y="493" width="1" height="1"/><rect x="114" y="489" width="1" height="1"/><rect x="114" y="494" width="1" height="1"/><rect x="115" y="492" width="1" height="1"/><rect x="115" y="493" width="1" height="1"/><rect x="115" y="494" width="1" height="1"/><rect x="116" y="490" width="1" height="1"/><rect x="116" y="493" width="1" height="1"/><rect x="117" y="491" width="1" height="1"/><rect x="117" y="492" width="1" height="1"/><rect x="117" y="494" width="1" height="1"/><rect x="118" y="493" width="1" height="1"/><rect x="118" y="495" width="1" height="1"/><rect x="119" y="491" width="1" height="1"/><rect x="119" y="492" width="1" height="1"/><rect x="119" y="493" width="1" height="1"/><rect x="119" y="498" width="1" height="1"/><rect x="120" y="472" width="1" height="1"/><rect x="120" y="489" width="1" height="1"/><rect x="120" y="492" width="1" height="1"/><rect x="120" y="493" width="1" height="1"/><rect x="121" y="490" width="1" height="1"/><rect x="121" y="542" width="1" height="1"/><rect x="122" y="489" width="1" height="1"/><rect x="122" y="493" width="1" height="1"/><rect x="122" y="499" width="1" height="1"/><rect x="123" y="489" width="1" height="1"/><rect x="123" y="492" width="1" height="1"/><rect x="123" y="497" width="1" height="1"/><rect x="124" y="489" width="1" height="1"/><rect x="124" y="491" width="1" height="1"/><rect x="125" y="488" width="1" height="1"/><rect x="125" y="493" width="1" height="1"/><rect x="125" y="496" width="1" height="1"/><rect x="126" y="489" width="1" height="1"/><rect x="126" y="493" width="1" height="1"/><rect x="126" y="494" width="1" height="1"/><rect x="127" y="488" width="1" height="1"/><rect x="127" y="490" width="1" height="1"/><rect x="127" y="493" width="1" height="1"/><rect x="128" y="487" width="1" height="1"/><rect x="128" y="493" width="1" height="1"/><rect x="129" y="492" width="1" height="1"/><rect x="129" y="495" width="1" height="1"/><rect x="130" y="459" width="1" height="1"/><rect x="130" y="490" width="1" height="1"/><rect x="130" y="494" width="1" height="1"/><rect x="131" y="490" width="1" height="1"/><rect x="131" y="491" width="1" height="1"/><rect x="131" y="495" width="1" height="1"/><rect x="131" y="498" width="1" height="1"/><rect x="132" y="487" width="1" height="1"/><rect x="132" y="492" width="1" height="1"/><rect x="132" y="493" width="1" height="1"/><rect x="133" y="488" width="1" height="1"/><rect x="133" y="493" width="1" height="1"/><rect x="133" y="495" width="1" height="1"/><rect x="134" y="493" width="1" height="1"/><rect x="134" y="494" width="1" height="1"/><rect x="134" y="495" width="1" height="1"/><rect x="135" y="487" width="1" height="1"/><rect x="135" y="490" width="1" height="1"/><rect x="136" y="493" width="1" height="1"/><rect x="137" y="488" width="1" height="1"/><rect x="137" y="489" width="1" height="1"/><rect x="137" y="491" width="1" height="1"/><rect x="138" y="489" width="1" height="1"/><rect x="138" y="491" width="1" height="1"/><rect x="138" y="494" width="1" height="1"/><rect x="139" y="488" width="1" height="1"/><rect x="139" y="489" width="1" height="1"/><rect x="139" y="492" width="1" height="1"/><rect x="139" y="495" width="1" height="1"/><rect x="140" y="489" width="1" height="1"/><rect x="140" y="492" width="1" height="1"/><rect x="140" y="500" width="1" height="1"/><rect x="141" y="489" width="1" height="1"/><rect x="141" y="491" width="1" height="1"/><rect x="141" y="493" width="1" height="1"/><rect x="142" y="493" width="1" height="1"/><rect x="142" y="494" width="1" height="1"/><rect x="143" y="491" width="1" height="1"/><rect x="143" y="493" width="1" height="1"/><rect x="144" y="488" width="1" height="1"/><rect x="144" y="489" width="1" height="1"/><rect x="144" y="493" width="1" height="1"/><rect x="144" y="494" width="1" height="1"/><rect x="145" y="488" width="1" height="1"/><rect x="145" y="489" width="1" height="1"/><rect x="145" y="494" width="1" height="1"/><rect x="145" y="500" width="1" height="1"/><rect x="146" y="491" width="1" height="1"/><rect x="146" y="492" width="1" height="1"/><rect x="146" y="495" width="1" height="1"/><rect x="147" y="491" width="1" height="1"/><rect x="147" y="492" width="1" height="1"/><rect x="147" y="493" width="1" height="1"/><rect x="148" y="490" width="1" height="1"/><rect x="148" y="493" width="1" height="1"/><rect x="148" y="494" width="1" height="1"/><rect x="149" y="493" width="1" height="1"/><rect x="150" y="475" width="1" height="1"/><rect x="150" y="488" width="1" height="1"/><rect x="150" y="493" width="1" height="1"/><rect x="151" y="491" width="1" height="1"/><rect x="151" y="492" width="1" height="1"/><rect x="152" y="491" width="1" height="1"/><rect x="152" y="495" width="1" height="1"/><rect x="153" y="492" width="1" height="1"/><rect x="153" y="493" width="1" height="1"/><rect x="153" y="494" width="1" height="1"/><rect x="153" y="496" width="1" height="1"/><rect x="154" y="494" width="1" height="1"/><rect x="154" y="495" width="1" height="1"/><rect x="155" y="493" width="1" height="1"/><rect x="156" y="485" width="1" height="1"/><rect x="156" y="493" width="1" height="1"/><rect x="156" y="495" width="1" height="1"/><rect x="156" y="496" width="1" height="1"/><rect x="157" y="489" width="1" height="1"/><rect x="157" y="492" width="1" height="1"/><rect x="158" y="492" width="1" height="1"/><rect x="158" y="493" width="1" height="1"/><rect x="158" y="494" width="1" height="1"/><rect x="159" y="492" width="1" height="1"/><rect x="159" y="493" width="1" height="1"/><rect x="159" y="496" width="1" height="1"/><rect x="160" y="492" width="1" height="1"/><rect x="160" y="496" width="1" height="1"/><rect x="160" y="506" width="1" height="1"/><rect x="161" y="490" width="1" height="1"/><rect x="161" y="492" width="1" height="1"/><rect x="161" y="494" width="1" height="1"/><rect x="162" y="489" width="1" height="1"/><rect x="162" y="490" width="1" height="1"/><rect x="162" y="493" width="1" height="1"/><rect x="163" y="488" width="1" height="1"/><rect x="163" y="489" width="1" height="1"/><rect x="163" y="493" width="1" height="1"/><rect x="164" y="493" width="1" height="1"/><rect x="164" y="494" width="1" height="1"/><rect x="164" y="496" width="1" height="1"/><rect x="165" y="492" width="1" height="1"/><rect x="165" y="494" width="1" height="1"/><rect x="166" y="486" width="1" height="1"/><rect x="166" y="490" width="1" height="1"/><rect x="167" y="490" width="1" height="1"/><rect x="167" y="492" width="1" height="1"/><rect x="167" y="495" width="1" height="1"/><rect x="168" y="488" width="1" height="1"/><rect x="168" y="494" width="1" height="1"/><rect x="169" y="476" width="1" height="1"/><rect x="169" y="488" width="1" height="1"/><rect x="169" y="492" width="1" height="1"/><rect x="170" y="493" width="1" height="1"/><rect x="171" y="490" width="1" height="1"/><rect x="171" y="491" width="1" height="1"/><rect x="171" y="494" width="1" height="1"/><rect x="172" y="490" width="1" height="1"/><rect x="172" y="491" width="1" height="1"/><rect x="173" y="485" width="1" height="1"/><rect x="173" y="494" width="1" height="1"/><rect x="174" y="478" width="1" height="1"/><rect x="174" y="492" width="1" height="1"/><rect x="174" y="497" width="1" height="1"/><rect x="175" y="490" width="1" height="1"/><rect x="175" y="492" width="1" height="1"/><rect x="176" y="492" width="1" height="1"/><rect x="176" y="493" width="1" height="1"/><rect x="176" y="494" width="1" height="1"/><rect x="177" y="487" width="1" height="1"/><rect x="177" y="493" width="1" height="1"/><rect x="178" y="485" width="1" height="1"/><rect x="178" y="489" width="1" height="1"/><rect x="178" y="492" width="1" height="1"/><rect x="179" y="491" width="1" height="1"/><rect x="179" y="492" width="1" height="1"/><rect x="180" y="489" width="1" height="1"/><rect x="180" y="491" width="1" height="1"/><rect x="180" y="492" width="1" height="1"/><rect x="180" y="493" width="1" height="1"/><rect x="181" y="490" width="1" height="1"/><rect x="181" y="493" width="1" height="1"/><rect x="182" y="490" width="1" height="1"/><rect x="182" y="491" width="1" height="1"/><rect x="182" y="495" width="1" height="1"/><rect x="183" y="491" width="1" height="1"/><rect x="183" y="492" width="1" height="1"/><rect x="183" y="493" width="1" height="1"/><rect x="183" y="498" width="1" height="1"/><rect x="184" y="490" width="1" height="1"/><rect x="184" y="494" width="1" height="1"/><rect x="184" y="495" width="1" height="1"/><rect x="184" y="506" width="1" height="1"/><rect x="185" y="491" width="1" height="1"/><rect x="185" y="494" width="1" height="1"/><rect x="186" y="492" width="1" height="1"/><rect x="186" y="494" width="1" height="1"/><rect x="187" y="486" width="1" height="1"/><rect x="187" y="493" width="1" height="1"/><rect x="188" y="494" width="1" height="1"/><rect x="189" y="493" width="1" height="1"/><rect x="189" y="494" width="1" height="1"/><rect x="190" y="492" width="1" height="1"/><rect x="190" y="493" width="1" height="1"/><rect x="190" y="494" width="1" height="1"/><rect x="191" y="485" width="1" height="1"/><rect x="191" y="490" width="1" height="1"/><rect x="192" y="492" width="1" height="1"/><rect x="192" y="493" width="1" height="1"/><rect x="193" y="490" width="1" height="1"/><rect x="194" y="486" width="1" height="1"/><rect x="194" y="489" width="1" height="1"/><rect x="194" y="490" width="1" height="1"/><rect x="195" y="491" width="1" height="1"/><rect x="195" y="492" width="1" height="1"/><rect x="195" y="496" width="1" height="1"/><rect x="196" y="489" width="1" height="1"/><rect x="196" y="493" width="1" height="1"/><rect x="196" y="494" width="1" height="1"/><rect x="196" y="497" width="1" height="1"/><rect x="197" y="490" width="1" height="1"/><rect x="197" y="491" width="1" height="1"/><rect x="198" y="490" width="1" height="1"/><rect x="198" y="495" width="1" height="1"/><rect x="199" y="486" width="1" height="1"/><rect x="199" y="489" width="1" height="1"/><rect x="199" y="494" width="1" height="1"/><rect x="200" y="490" width="1" height="1"/><rect x="200" y="492" width="1" height="1"/><rect x="200" y="495" width="1" height="1"/><rect x="201" y="489" width="1" height="1"/><rect x="201" y="491" width="1" height="1"/><rect x="201" y="494" width="1" height="1"/><rect x="202" y="491" width="1" height="1"/><rect x="202" y="492" width="1" height="1"/><rect x="203" y="489" width="1" height="1"/><rect x="203" y="492" width="1" height="1"/><rect x="203" y="493" width="1" height="1"/><rect x="204" y="491" width="1" height="1"/><rect x="204" y="492" width="1" height="1"/><rect x="205" y="489" width="1" height="1"/><rect x="205" y="493" width="1" height="1"/><rect x="206" y="488" width="1" height="1"/><rect x="206" y="494" width="1" height="1"/><rect x="207" y="470" width="1" height="1"/><rect x="207" y="488" width="1" height="1"/><rect x="207" y="490" width="1" height="1"/><rect x="207" y="497" width="1" height="1"/><rect x="208" y="488" width="1" height="1"/><rect x="208" y="493" width="1" height="1"/><rect x="208" y="495" width="1" height="1"/><rect x="209" y="490" width="1" height="1"/><rect x="209" y="491" width="1" height="1"/><rect x="209" y="493" width="1" height="1"/><rect x="210" y="488" width="1" height="1"/><rect x="210" y="489" width="1" height="1"/><rect x="210" y="490" width="1" height="1"/><rect x="211" y="488" width="1" height="1"/><rect x="211" y="491" width="1" height="1"/><rect x="211" y="492" width="1" height="1"/><rect x="211" y="500" width="1" height="1"/><rect x="212" y="487" width="1" height="1"/><rect x="212" y="492" width="1" height="1"/><rect x="213" y="490" width="1" height="1"/><rect x="213" y="494" width="1" height="1"/><rect x="214" y="493" width="1" height="1"/><rect x="214" y="495" width="1" height="1"/><rect x="215" y="485" width="1" height="1"/><rect x="215" y="491" width="1" height="1"/><rect x="215" y="492" width="1" height="1"/><rect x="216" y="488" width="1" height="1"/><rect x="216" y="489" width="1" height="1"/><rect x="216" y="492" width="1" height="1"/><rect x="217" y="490" width="1" height="1"/><rect x="217" y="491" width="1" height="1"/><rect x="218" y="488" width="1" height="1"/><rect x="218" y="491" width="1" height="1"/><rect x="219" y="488" width="1" height="1"/><rect x="219" y="490" width="1" height="1"/><rect x="220" y="489" width="1" height="1"/><rect x="220" y="496" width="1" height="1"/><rect x="221" y="488" width="1" height="1"/><rect x="221" y="491" width="1" height="1"/><rect x="222" y="493" width="1" height="1"/><rect x="222" y="494" width="1" height="1"/><rect x="223" y="490" width="1" height="1"/><rect x="223" y="492" width="1" height="1"/><rect x="223" y="493" width="1" height="1"/><rect x="224" y="489" width="1" height="1"/><rect x="224" y="490" width="1" height="1"/><rect x="224" y="492" width="1" height="1"/><rect x="225" y="492" width="1" height="1"/><rect x="226" y="486" width="1" height="1"/><rect x="226" y="491" width="1" height="1"/><rect x="226" y="492" width="1" height="1"/><rect x="226" y="493" width="1" height="1"/><rect x="227" y="492" width="1" height="1"/><rect x="227" y="493" width="1" height="1"/><rect x="228" y="490" width="1" height="1"/><rect x="229" y="490" width="1" height="1"/><rect x="229" y="492" width="1" height="1"/><rect x="230" y="492" width="1" height="1"/><rect x="230" y="494" width="1" height="1"/><rect x="231" y="490" width="1" height="1"/><rect x="231" y="493" width="1" height="1"/><rect x="232" y="461" width="1" height="1"/><rect x="232" y="492" width="1" height="1"/><rect x="232" y="495" width="1" height="1"/><rect x="233" y="489" width="1" height="1"/><rect x="233" y="492" width="1" height="1"/><rect x="233" y="493" width="1" height="1"/><rect x="234" y="492" width="1" height="1"/><rect x="234" y="493" width="1" height="1"/><rect x="235" y="493" width="1" height="1"/><rect x="235" y="496" width="1" height="1"/><rect x="236" y="492" width="1" height="1"/><rect x="237" y="491" width="1" height="1"/><rect x="237" y="492" width="1" height="1"/><rect x="238" y="487" width="1" height="1"/><rect x="238" y="491" width="1" height="1"/><rect x="238" y="493" width="1" height="1"/><rect x="239" y="491" width="1" height="1"/><rect x="239" y="495" width="1" height="1"/><rect x="240" y="487" width="1" height="1"/><rect x="240" y="494" width="1" height="1"/><rect x="240" y="495" width="1" height="1"/><rect x="241" y="490" width="1" height="1"/><rect x="241" y="491" width="1" height="1"/><rect x="241" y="493" width="1" height="1"/><rect x="241" y="497" width="1" height="1"/><rect x="242" y="490" width="1" height="1"/><rect x="242" y="491" width="1" height="1"/><rect x="242" y="493" width="1" height="1"/><rect x="243" y="490" width="1" height="1"/><rect x="243" y="493" width="1" height="1"/><rect x="243" y="495" width="1" height="1"/><rect x="244" y="487" width="1" height="1"/><rect x="244" y="490" width="1" height="1"/><rect x="244" y="491" width="1" height="1"/><rect x="244" y="494" width="1" height="1"/><rect x="245" y="490" width="1" height="1"/><rect x="245" y="491" width="1" height="1"/><rect x="245" y="492" width="1" height="1"/><rect x="245" y="495" width="1" height="1"/><rect x="246" y="467" width="1" height="1"/><rect x="246" y="487" width="1" height="1"/><rect x="246" y="490" width="1" height="1"/><rect x="246" y="491" width="1" height="1"/><rect x="247" y="493" width="1" height="1"/><rect x="247" y="494" width="1" height="1"/><rect x="247" y="495" width="1" height="1"/><rect x="247" y="500" width="1" height="1"/><rect x="248" y="490" width="1" height="1"/><rect x="248" y="491" width="1" height="1"/><rect x="248" y="502" width="1" height="1"/><rect x="249" y="491" width="1" height="1"/><rect x="249" y="493" width="1" height="1"/><rect x="249" y="494" width="1" height="1"/><rect x="250" y="491" width="1" height="1"/><rect x="250" y="492" width="1" height="1"/><rect x="251" y="493" width="1" height="1"/><rect x="251" y="496" width="1" height="1"/><rect x="252" y="490" width="1" height="1"/><rect x="252" y="494" width="1" height="1"/><rect x="253" y="486" width="1" height="1"/><rect x="253" y="489" width="1" height="1"/><rect x="253" y="491" width="1" height="1"/><rect x="253" y="494" width="1" height="1"/><rect x="254" y="493" width="1" height="1"/><rect x="254" y="494" width="1" height="1"/><rect x="255" y="489" width="1" height="1"/><rect x="255" y="491" width="1" height="1"/><rect x="255" y="493" width="1" height="1"/><rect x="256" y="490" width="1" height="1"/><rect x="256" y="493" width="1" height="1"/><rect x="257" y="488" width="1" height="1"/><rect x="257" y="492" width="1" height="1"/><rect x="258" y="490" width="1" height="1"/><rect x="258" y="491" width="1" height="1"/><rect x="258" y="492" width="1" height="1"/><rect x="259" y="486" width="1" height="1"/><rect x="259" y="492" width="1" height="1"/><rect x="260" y="491" width="1" height="1"/><rect x="261" y="492" width="1" height="1"/><rect x="261" y="494" width="1" height="1"/><rect x="262" y="491" width="1" height="1"/><rect x="262" y="493" width="1" height="1"/><rect x="263" y="492" width="1" height="1"/><rect x="263" y="493" width="1" height="1"/><rect x="264" y="490" width="1" height="1"/><rect x="264" y="491" width="1" height="1"/><rect x="265" y="442" width="1" height="1"/><rect x="265" y="469" width="1" height="1"/><rect x="265" y="471" width="1" height="1"/><rect x="265" y="495" width="1" height="1"/><rect x="266" y="492" width="1" height="1"/><rect x="267" y="489" width="1" height="1"/><rect x="267" y="491" width="1" height="1"/><rect x="268" y="490" width="1" height="1"/><rect x="268" y="492" width="1" height="1"/><rect x="269" y="492" width="1" height="1"/><rect x="270" y="491" width="1" height="1"/><rect x="271" y="488" width="1" height="1"/><rect x="271" y="489" width="1" height="1"/><rect x="271" y="494" width="1" height="1"/><rect x="272" y="491" width="1" height="1"/><rect x="272" y="492" width="1" height="1"/><rect x="273" y="493" width="1" height="1"/><rect x="274" y="494" width="1" height="1"/><rect x="275" y="456" width="1" height="1"/><rect x="275" y="494" width="1" height="1"/><rect x="276" y="492" width="1" height="1"/><rect x="277" y="490" width="1" height="1"/><rect x="277" y="493" width="1" height="1"/><rect x="278" y="492" width="1" height="1"/><rect x="279" y="490" width="1" height="1"/><rect x="280" y="490" width="1" height="1"/><rect x="280" y="493" width="1" height="1"/><rect x="281" y="490" width="1" height="1"/><rect x="281" y="492" width="1" height="1"/><rect x="282" y="493" width="1" height="1"/><rect x="282" y="494" width="1" height="1"/><rect x="283" y="490" width="1" height="1"/><rect x="284" y="490" width="1" height="1"/><rect x="284" y="497" width="1" height="1"/><rect x="285" y="491" width="1" height="1"/><rect x="285" y="493" width="1" height="1"/><rect x="286" y="492" width="1" height="1"/><rect x="287" y="493" width="1" height="1"/><rect x="287" y="495" width="1" height="1"/><rect x="288" y="467" width="1" height="1"/><rect x="288" y="493" width="1" height="1"/><rect x="289" y="491" width="1" height="1"/><rect x="289" y="492" width="1" height="1"/><rect x="290" y="492" width="1" height="1"/><rect x="291" y="488" width="1" height="1"/><rect x="291" y="490" width="1" height="1"/><rect x="291" y="491" width="1" height="1"/><rect x="292" y="491" width="1" height="1"/><rect x="292" y="493" width="1" height="1"/><rect x="292" y="501" width="1" height="1"/><rect x="293" y="490" width="1" height="1"/><rect x="293" y="499" width="1" height="1"/><rect x="294" y="491" width="1" height="1"/><rect x="294" y="493" width="1" height="1"/><rect x="295" y="494" width="1" height="1"/><rect x="296" y="492" width="1" height="1"/><rect x="296" y="495" width="1" height="1"/><rect x="297" y="490" width="1" height="1"/><rect x="298" y="493" width="1" height="1"/><rect x="298" y="495" width="1" height="1"/><rect x="299" y="491" width="1" height="1"/><rect x="300" y="493" width="1" height="1"/><rect x="300" y="494" width="1" height="1"/><rect x="301" y="494" width="1" height="1"/><rect x="302" y="490" width="1" height="1"/><rect x="303" y="492" width="1" height="1"/><rect x="303" y="493" width="1" height="1"/><rect x="304" y="492" width="1" height="1"/><rect x="305" y="493" width="1" height="1"/><rect x="306" y="489" width="1" height="1"/><rect x="306" y="490" width="1" height="1"/><rect x="307" y="491" width="1" height="1"/><rect x="307" y="495" width="1" height="1"/><rect x="308" y="491" width="1" height="1"/><rect x="309" y="489" width="1" height="1"/><rect x="309" y="490" width="1" height="1"/><rect x="309" y="491" width="1" height="1"/><rect x="310" y="491" width="1" height="1"/><rect x="310" y="492" width="1" height="1"/><rect x="311" y="491" width="1" height="1"/><rect x="312" y="491" width="1" height="1"/><rect x="313" y="494" width="1" height="1"/><rect x="314" y="492" width="1" height="1"/><rect x="314" y="494" width="1" height="1"/><rect x="315" y="491" width="1" height="1"/><rect x="316" y="489" width="1" height="1"/><rect x="316" y="490" width="1" height="1"/><rect x="317" y="490" width="1" height="1"/><rect x="317" y="493" width="1" height="1"/><rect x="318" y="493" width="1" height="1"/><rect x="319" y="468" width="1" height="1"/><rect x="319" y="494" width="1" height="1"/><rect x="320" y="489" width="1" height="1"/><rect x="320" y="492" width="1" height="1"/><rect x="321" y="491" width="1" height="1"/><rect x="321" y="492" width="1" height="1"/><rect x="322" y="492" width="1" height="1"/><rect x="322" y="494" width="1" height="1"/><rect x="323" y="493" width="1" height="1"/><rect x="324" y="490" width="1" height="1"/><rect x="324" y="491" width="1" height="1"/><rect x="325" y="492" width="1" height="1"/><rect x="326" y="491" width="1" height="1"/><rect x="327" y="492" width="1" height="1"/><rect x="328" y="491" width="1" height="1"/><rect x="328" y="493" width="1" height="1"/><rect x="329" y="491" width="1" height="1"/><rect x="329" y="494" width="1" height="1"/><rect x="330" y="491" width="1" height="1"/><rect x="330" y="492" width="1" height="1"/><rect x="331" y="493" width="1" height="1"/><rect x="332" y="491" width="1" height="1"/><rect x="332" y="493" width="1" height="1"/><rect x="333" y="476" width="1" height="1"/><rect x="333" y="494" width="1" height="1"/><rect x="334" y="492" width="1" height="1"/><rect x="335" y="491" width="1" height="1"/><rect x="335" y="492" width="1" height="1"/><rect x="336" y="493" width="1" height="1"/><rect x="337" y="492" width="1" height="1"/><rect x="337" y="493" width="1" height="1"/><rect x="338" y="492" width="1" height="1"/><rect x="339" y="492" width="1" height="1"/><rect x="339" y="494" width="1" height="1"/><rect x="340" y="491" width="1" height="1"/><rect x="340" y="493" width="1" height="1"/><rect x="341" y="459" width="1" height="1"/><rect x="341" y="491" width="1" height="1"/><rect x="342" y="488" width="1" height="1"/><rect x="342" y="492" width="1" height="1"/><rect x="343" y="494" width="1" height="1"/><rect x="344" y="490" width="1" height="1"/><rect x="345" y="492" width="1" height="1"/><rect x="346" y="491" width="1" height="1"/><rect x="347" y="490" width="1" height="1"/><rect x="347" y="492" width="1" height="1"/><rect x="348" y="492" width="1" height="1"/><rect x="349" y="492" width="1" height="1"/><rect x="349" y="498" width="1" height="1"/><rect x="350" y="491" width="1" height="1"/><rect x="350" y="496" width="1" height="1"/><rect x="351" y="492" width="1" height="1"/><rect x="351" y="493" width="1" height="1"/><rect x="352" y="492" width="1" height="1"/><rect x="353" y="493" width="1" height="1"/><rect x="354" y="481" width="1" height="1"/><rect x="354" y="491" width="1" height="1"/><rect x="355" y="491" width="1" height="1"/><rect x="355" y="492" width="1" height="1"/><rect x="356" y="490" width="1" height="1"/><rect x="356" y="492" width="1" height="1"/><rect x="357" y="493" width="1" height="1"/><rect x="357" y="499" width="1" height="1"/><rect x="358" y="490" width="1" height="1"/><rect x="358" y="493" width="1" height="1"/><rect x="359" y="492" width="1" height="1"/><rect x="360" y="492" width="1" height="1"/><rect x="360" y="494" width="1" height="1"/><rect x="361" y="473" width="1" height="1"/><rect x="361" y="489" width="1" height="1"/><rect x="361" y="493" width="1" height="1"/><rect x="362" y="491" width="1" height="1"/><rect x="362" y="494" width="1" height="1"/><rect x="362" y="496" width="1" height="1"/><rect x="363" y="490" width="1" height="1"/><rect x="364" y="491" width="1" height="1"/><rect x="365" y="491" width="1" height="1"/><rect x="365" y="494" width="1" height="1"/><rect x="366" y="490" width="1" height="1"/><rect x="367" y="493" width="1" height="1"/><rect x="368" y="491" width="1" height="1"/><rect x="368" y="493" width="1" height="1"/><rect x="369" y="480" width="1" height="1"/><rect x="369" y="493" width="1" height="1"/><rect x="370" y="489" width="1" height="1"/><rect x="370" y="491" width="1" height="1"/><rect x="370" y="493" width="1" height="1"/><rect x="371" y="491" width="1" height="1"/><rect x="371" y="492" width="1" height="1"/><rect x="372" y="489" width="1" height="1"/><rect x="372" y="490" width="1" height="1"/><rect x="373" y="491" width="1" height="1"/><rect x="373" y="492" width="1" height="1"/><rect x="374" y="490" width="1" height="1"/><rect x="374" y="492" width="1" height="1"/><rect x="375" y="492" width="1" height="1"/><rect x="376" y="491" width="1" height="1"/><rect x="377" y="490" width="1" height="1"/><rect x="377" y="491" width="1" height="1"/><rect x="378" y="488" width="1" height="1"/><rect x="378" y="492" width="1" height="1"/><rect x="379" y="490" width="1" height="1"/><rect x="380" y="491" width="1" height="1"/><rect x="380" y="492" width="1" height="1"/><rect x="381" y="489" width="1" height="1"/><rect x="381" y="501" width="1" height="1"/><rect x="382" y="490" width="1" height="1"/><rect x="382" y="492" width="1" height="1"/><rect x="383" y="492" width="1" height="1"/><rect x="384" y="493" width="1" height="1"/><rect x="385" y="490" width="1" height="1"/><rect x="385" y="491" width="1" height="1"/><rect x="386" y="490" width="1" height="1"/><rect x="386" y="491" width="1" height="1"/><rect x="387" y="494" width="1" height="1"/><rect x="388" y="488" width="1" height="1"/><rect x="388" y="493" width="1" height="1"/><rect x="389" y="491" width="1" height="1"/><rect x="390" y="492" width="1" height="1"/><rect x="391" y="490" width="1" height="1"/><rect x="391" y="491" width="1" height="1"/><rect x="392" y="491" width="1" height="1"/><rect x="393" y="492" width="1" height="1"/><rect x="393" y="493" width="1" height="1"/><rect x="394" y="492" width="1" height="1"/><rect x="394" y="500" width="1" height="1"/><rect x="395" y="489" width="1" height="1"/><rect x="395" y="493" width="1" height="1"/><rect x="396" y="485" width="1" height="1"/><rect x="396" y="493" width="1" height="1"/><rect x="396" y="494" width="1" height="1"/><rect x="397" y="489" width="1" height="1"/><rect x="397" y="492" width="1" height="1"/><rect x="398" y="492" width="1" height="1"/><rect x="399" y="492" width="1" height="1"/><rect x="399" y="494" width="1" height="1"/><rect x="400" y="489" width="1" height="1"/><rect x="401" y="490" width="1" height="1"/><rect x="402" y="490" width="1" height="1"/><rect x="403" y="493" width="1" height="1"/><rect x="403" y="494" width="1" height="1"/><rect x="404" y="492" width="1" height="1"/><rect x="405" y="490" width="1" height="1"/><rect x="406" y="493" width="1" height="1"/><rect x="407" y="491" width="1" height="1"/><rect x="407" y="492" width="1" height="1"/><rect x="408" y="494" width="1" height="1"/><rect x="409" y="492" width="1" height="1"/><rect x="409" y="494" width="1" height="1"/><rect x="410" y="491" width="1" height="1"/><rect x="410" y="494" width="1" height="1"/><rect x="411" y="490" width="1" height="1"/><rect x="411" y="493" width="1" height="1"/><rect x="412" y="490" width="1" height="1"/><rect x="413" y="493" width="1" height="1"/><rect x="414" y="494" width="1" height="1"/><rect x="414" y="495" width="1" height="1"/><rect x="415" y="490" width="1" height="1"/><rect x="415" y="493" width="1" height="1"/><rect x="416" y="491" width="1" height="1"/><rect x="417" y="490" width="1" height="1"/><rect x="417" y="492" width="1" height="1"/><rect x="418" y="493" width="1" height="1"/><rect x="418" y="495" width="1" height="1"/><rect x="419" y="493" width="1" height="1"/><rect x="420" y="480" width="1" height="1"/><rect x="420" y="490" width="1" height="1"/><rect x="420" y="493" width="1" height="1"/><rect x="421" y="491" width="1" height="1"/><rect x="422" y="492" width="1" height="1"/><rect x="423" y="491" width="1" height="1"/><rect x="423" y="495" width="1" height="1"/><rect x="424" y="490" width="1" height="1"/><rect x="424" y="493" width="1" height="1"/><rect x="425" y="487" width="1" height="1"/><rect x="425" y="492" width="1" height="1"/><rect x="425" y="493" width="1" height="1"/><rect x="426" y="470" width="1" height="1"/><rect x="426" y="492" width="1" height="1"/><rect x="426" y="494" width="1" height="1"/><rect x="427" y="483" width="1" height="1"/><rect x="427" y="492" width="1" height="1"/><rect x="428" y="491" width="1" height="1"/><rect x="429" y="489" width="1" height="1"/><rect x="429" y="493" width="1" height="1"/><rect x="430" y="495" width="1" height="1"/><rect x="431" y="494" width="1" height="1"/><rect x="432" y="494" width="1" height="1"/><rect x="433" y="490" width="1" height="1"/><rect x="433" y="492" width="1" height="1"/><rect x="434" y="491" width="1" height="1"/><rect x="434" y="494" width="1" height="1"/><rect x="435" y="491" width="1" height="1"/><rect x="436" y="490" width="1" height="1"/><rect x="436" y="494" width="1" height="1"/><rect x="437" y="489" width="1" height="1"/><rect x="438" y="491" width="1" height="1"/><rect x="438" y="493" width="1" height="1"/><rect x="439" y="490" width="1" height="1"/><rect x="439" y="493" width="1" height="1"/><rect x="440" y="492" width="1" height="1"/><rect x="440" y="493" width="1" height="1"/><rect x="441" y="491" width="1" height="1"/><rect x="441" y="492" width="1" height="1"/><rect x="442" y="491" width="1" height="1"/><rect x="442" y="493" width="1" height="1"/><rect x="443" y="492" width="1" height="1"/><rect x="444" y="488" width="1" height="1"/><rect x="444" y="490" width="1" height="1"/><rect x="445" y="489" width="1" height="1"/><rect x="445" y="496" width="1" height="1"/><rect x="446" y="490" width="1" height="1"/><rect x="447" y="460" width="1" height="1"/><rect x="447" y="493" width="1" height="1"/><rect x="448" y="490" width="1" height="1"/><rect x="449" y="490" width="1" height="1"/><rect x="449" y="493" width="1" height="1"/><rect x="450" y="490" width="1" height="1"/><rect x="451" y="492" width="1" height="1"/><rect x="451" y="494" width="1" height="1"/><rect x="452" y="492" width="1" height="1"/><rect x="452" y="494" width="1" height="1"/><rect x="453" y="489" width="1" height="1"/><rect x="454" y="490" width="1" height="1"/><rect x="454" y="494" width="1" height="1"/><rect x="455" y="492" width="1" height="1"/><rect x="456" y="491" width="1" height="1"/><rect x="456" y="492" width="1" height="1"/><rect x="457" y="492" width="1" height="1"/><rect x="457" y="495" width="1" height="1"/><rect x="458" y="493" width="1" height="1"/><rect x="459" y="489" width="1" height="1"/><rect x="459" y="499" width="1" height="1"/><rect x="460" y="490" width="1" height="1"/><rect x="460" y="492" width="1" height="1"/><rect x="461" y="490" width="1" height="1"/><rect x="462" y="473" width="1" height="1"/><rect x="462" y="491" width="1" height="1"/><rect x="463" y="491" width="1" height="1"/><rect x="464" y="492" width="1" height="1"/><rect x="465" y="470" width="1" height="1"/><rect x="465" y="490" width="1" height="1"/><rect x="465" y="494" width="1" height="1"/><rect x="466" y="492" width="1" height="1"/><rect x="467" y="492" width="1" height="1"/><rect x="468" y="491" width="1" height="1"/><rect x="468" y="493" width="1" height="1"/><rect x="469" y="490" width="1" height="1"/><rect x="469" y="493" width="1" height="1"/><rect x="470" y="492" width="1" height="1"/><rect x="471" y="490" width="1" height="1"/><rect x="471" y="491" width="1" height="1"/><rect x="472" y="493" width="1" height="1"/><rect x="473" y="491" width="1" height="1"/><rect x="474" y="491" width="1" height="1"/><rect x="475" y="494" width="1" height="1"/><rect x="475" y="495" width="1" height="1"/><rect x="476" y="494" width="1" height="1"/><rect x="476" y="497" width="1" height="1"/><rect x="477" y="491" width="1" height="1"/><rect x="478" y="491" width="1" height="1"/><rect x="478" y="493" width="1" height="1"/><rect x="479" y="490" width="1" height="1"/><rect x="479" y="491" width="1" height="1"/><rect x="480" y="492" width="1" height="1"/><rect x="481" y="491" width="1" height="1"/><rect x="482" y="491" width="1" height="1"/><rect x="486" y="494" width="1" height="1"/><rect x="487" y="493" width="1" height="1"/><rect x="488" y="491" width="1" height="1"/><rect x="489" y="489" width="1" height="1"/><rect x="491" y="490" width="1" height="1"/><rect x="493" y="495" width="1" height="1"/><rect x="494" y="491" width="1" height="1"/><rect x="497" y="493" width="1" height="1"/><rect x="498" y="491" width="1" height="1"/><rect x="504" y="493" width="1" height="1"/><rect x="505" y="491" width="1" height="1"/><rect x="506" y="491" width="1" height="1"/><rect x="507" y="489" width="1" height="1"/><rect x="508" y="494" width="1" height="1"/><rect x="510" y="493" width="1" height="1"/><rect x="511" y="489" width="1" height="1"/><rect x="512" y="495" width="1" height="1"/><rect x="513" y="488" width="1" height="1"/><rect x="515" y="492" width="1" height="1"/><rect x="516" y="490" width="1" height="1"/><rect x="517" y="494" width="1" height="1"/><rect x="519" y="493" width="1" height="1"/><rect x="520" y="490" width="1" height="1"/><rect x="524" y="492" width="1" height="1"/><rect x="526" y="493" width="1" height="1"/><rect x="528" y="492" width="1" height="1"/><rect x="529" y="493" width="1" height="1"/><rect x="531" y="493" width="1" height="1"/><rect x="532" y="492" width="1" height="1"/><rect x="533" y="493" width="1" height="1"/><rect x="537" y="491" width="1" height="1"/><rect x="538" y="495" width="1" height="1"/><rect x="539" y="491" width="1" height="1"/><rect x="540" y="493" width="1" height="1"/><rect x="541" y="490" width="1" height="1"/><rect x="542" y="491" width="1" height="1"/><rect x="543" y="491" width="1" height="1"/><rect x="545" y="493" width="1" height="1"/><rect x="553" y="493" width="1" height="1"/><rect x="561" y="492" width="1" height="1"/><rect x="562" y="490" width="1" height="1"/><rect x="574" y="549" width="1" height="1"/></g>
 <polyline points="66.0,245.0 68.0,247.0 70.7,249.0 75.0,248.5 78.9,247.3 82.7,248.7 86.6,247.5 90.2,248.4 93.7,247.5 96.8,246.8 100.0,248.0 103.5,247.8 107.0,247.5 111.0,248.7 115.0,248.0 118.5,248.0 122.0,248.0 127.5,247.0 132.8,250.0 136.4,249.9 140.0,248.0 144.0,248.7 148.0,247.5 151.5,247.1 155.0,248.5 158.0,250.2 161.0,250.0 169.0,246.5 172.0,246.3 175.0,248.0 178.8,249.0 182.5,250.0 189.7,247.0 193.1,247.3 196.6,248.6 200.0,248.0 203.1,248.1 206.2,250.0 210.7,246.3 214.2,247.0 218.6,250.0 226.6,247.0 231.0,246.0 236.4,249.0 240.9,239.6 243.5,240.0 246.2,242.2 251.5,238.3 256.8,240.0 261.3,241.5 264.8,247.2 267.5,242.2 271.0,248.5 275.5,249.5 280.8,249.5 283.5,243.5 288.8,238.9 293.3,248.0 296.5,247.4 299.8,249.6 303.0,249.0 306.6,243.0 308.3,240.1 311.5,240.5 313.7,247.0 317.0,248.5 320.7,248.7 324.3,249.7 328.0,249.0 331.3,248.7 334.6,246.5 338.5,248.0 342.8,248.5 347.0,249.0 352.4,247.0 355.9,248.0 359.5,249.0 364.9,247.5 369.3,248.7 373.7,248.0 380.0,239.2 381.7,239.2 384.4,244.0 388.0,246.0 390.0,249.0 393.3,249.5 396.8,247.5 400.4,247.5 404.0,249.0 408.4,248.0 412.3,242.2 415.5,248.0 418.0,247.5 421.6,247.1 425.3,248.5 430.6,248.5 432.4,243.0 435.0,245.0 437.7,240.0 440.4,245.0 445.7,249.0 452.8,240.0 455.4,243.0 460.8,247.0 464.3,249.0 468.6,247.6 473.0,248.0 476.1,248.4 479.3,247.0 484.6,249.0 487.8,247.6 490.9,248.0 494.9,248.4 498.8,247.0 505.0,250.0 513.0,240.6 515.7,242.0 518.4,248.0 521.7,248.0 524.9,248.9 528.2,248.0 531.8,246.8 535.3,248.4 538.9,246.3 542.4,247.0 549.5,250.0 551.2,247.0 556.6,249.0 561.0,246.5 565.5,249.0 569.9,247.6 574.3,248.0 576.5,243.0 579.7,240.5" fill="none" stroke="#14b6fa" stroke-width="1.15"/>
</svg>
<div class="t" style="left:66px;top:184px">MB/s</div>
<div class="t" style="left:562px;top:184px;letter-spacing:-0.9px">ms</div>
<div class="yl" style="top:191px">550</div>
<div class="yr" style="top:191px">0.55</div>
<div class="yl" style="top:225px">500</div>
<div class="yr" style="top:225px">0.50</div>
<div class="yl" style="top:260px">450</div>
<div class="yr" style="top:260px">0.45</div>
<div class="yl" style="top:295px">400</div>
<div class="yr" style="top:295px">0.40</div>
<div class="yl" style="top:330px">350</div>
<div class="yr" style="top:330px">0.35</div>
<div class="yl" style="top:365px">300</div>
<div class="yr" style="top:365px">0.30</div>
<div class="yl" style="top:400px">250</div>
<div class="yr" style="top:400px">0.25</div>
<div class="yl" style="top:435px">200</div>
<div class="yr" style="top:435px">0.20</div>
<div class="yl" style="top:470px">150</div>
<div class="yr" style="top:470px">0.15</div>
<div class="yl" style="top:505px">100</div>
<div class="yr" style="top:505px">0.10</div>
<div class="yl" style="top:540px">50</div>
<div class="yr" style="top:540px">0.05</div>
<div class="xl" style="left:25.7px">0</div>
<div class="xl" style="left:76.7px">24</div>
<div class="xl" style="left:127.7px">48</div>
<div class="xl" style="left:179.7px">72</div>
<div class="xl" style="left:230.7px">96</div>
<div class="xl" style="left:282.7px">120</div>
<div class="xl" style="left:333.7px">144</div>
<div class="xl" style="left:385.7px">168</div>
<div class="xl" style="left:436.7px">192</div>
<div class="xl" style="left:488.7px">216</div>
<div class="xl" style="left:539.7px">240gB</div>

<!-- right panel -->
<div class="a" style="left:634px;top:177px;width:98px;height:25px;border:1px solid #2f80c0;border-radius:3px;background:linear-gradient(#eaf6fd 0,#d9f0fc 45%,#c4e6f8 50%,#b0daf2 100%)"></div>
<div class="a" style="left:635px;top:178px;width:96px;height:23px;border:1px solid #48c4f4;border-radius:2px;box-shadow:inset 0 0 1px 0 rgba(72,196,244,.6)"></div>
<div class="t" style="left:668px;top:181px">Start</div>
<div class="sep" style="top:215px"></div>
<svg class="a" style="left:629px;top:223px" width="16" height="16" viewBox="0 0 16 16">
 <defs><radialGradient id="rb" cx=".4" cy=".35" r=".7"><stop offset="0" stop-color="#bfeaff"/><stop offset=".45" stop-color="#3aa0d8"/><stop offset="1" stop-color="#0a4a80"/></radialGradient>
 <linearGradient id="rw" x1="0" y1="0" x2="1" y2="1"><stop offset="0" stop-color="#d0d3d8"/><stop offset="1" stop-color="#fdfdfd"/></linearGradient></defs>
 <circle cx="8" cy="8" r="7.3" fill="#f6f6f6" stroke="#8a8a8a" stroke-width="1"/>
 <circle cx="8" cy="8" r="4.3" fill="url(#rb)" stroke="#1a3550" stroke-width="1"/>
</svg>
<div class="t" style="left:648px;top:223px;letter-spacing:0.05px">Read</div>
<svg class="a" style="left:629px;top:243px" width="16" height="16" viewBox="0 0 16 16">
 <circle cx="8" cy="8" r="7.3" fill="#f6f6f6" stroke="#8a8a8a" stroke-width="1"/>
 <circle cx="8" cy="8" r="5" fill="url(#rw)"/>
</svg>
<div class="t" style="left:648px;top:243px">Write</div>
<div class="sep" style="top:263px"></div>
<div class="chk" style="top:273px"></div>
<div class="t" style="left:648px;top:273px">Short stroke</div>
<div class="a" style="left:629px;top:297px;width:82px;height:24px;border:1px solid #b8b8b8;background:#fff"></div>
<div class="t" style="left:632px;top:300px;color:#8a8478">40</div>
<div class="a" style="left:690px;top:299px;width:19px;height:10px;border:1px solid #c4c4c4;background:#f4f4f4"></div>
<div class="a" style="left:690px;top:309px;width:19px;height:10px;border:1px solid #c4c4c4;background:#f4f4f4"></div>
<svg class="a" style="left:694px;top:301px" width="11" height="16"><path d="M1.5 5 L5.5 1.5 L9.5 5 Z" fill="#b0b0b0"/><path d="M1.5 11 L5.5 14.5 L9.5 11 Z" fill="#b0b0b0"/></svg>
<div class="t" style="left:727px;top:301px">gB</div>
<div class="chk" style="top:333px"></div>
<svg class="a" style="left:632px;top:335px" width="12" height="12"><path d="M1.4 6.4 L4.3 10 L9.4 1.8" fill="none" stroke="#3f529c" stroke-width="2.2"/></svg>
<div class="t" style="left:648px;top:333px;letter-spacing:-0.3px">Transfer rate</div>
<div class="sep" style="top:351px"></div>
<div class="t" style="left:629px;top:355px">Minimum</div>
<div class="vbox" style="top:373px;height:19px;color:#1ab2f6">476.0 MB/s</div>
<div class="t" style="left:629px;top:395px">Maximum</div>
<div class="vbox" style="top:413px;height:19px;color:#1ab2f6">493.5 MB/s</div>
<div class="t" style="left:629px;top:433px;letter-spacing:-0.09px">Average</div>
<div class="vbox" style="top:452px;height:18px;line-height:18px;color:#1ab2f6">480.5 MB/s</div>
<div class="sep" style="top:479px"></div>
<div class="chk" style="top:487px"></div>
<svg class="a" style="left:632px;top:489px" width="12" height="12"><path d="M1.4 6.4 L4.3 10 L9.4 1.8" fill="none" stroke="#3f529c" stroke-width="2.2"/></svg>
<div class="t" style="left:648px;top:487px;letter-spacing:-0.18px">Access time</div>
<div class="vbox" style="top:506px;height:18px;line-height:18px;color:#ffff00">0.130 ms</div>
<div class="chk" style="top:529px"></div>
<svg class="a" style="left:632px;top:531px" width="12" height="12"><path d="M1.4 6.4 L4.3 10 L9.4 1.8" fill="none" stroke="#3f529c" stroke-width="2.2"/></svg>
<div class="t" style="left:648px;top:529px">Burst rate</div>
<div class="vbox" style="top:548px;height:18px;line-height:18px">376.2 MB/s</div>
<div class="t" style="left:629px;top:569px;letter-spacing:-0.3px">CPU usage</div>
<div class="vbox" style="top:588px;height:18px;line-height:18px">1.1%</div>
</body></html>
